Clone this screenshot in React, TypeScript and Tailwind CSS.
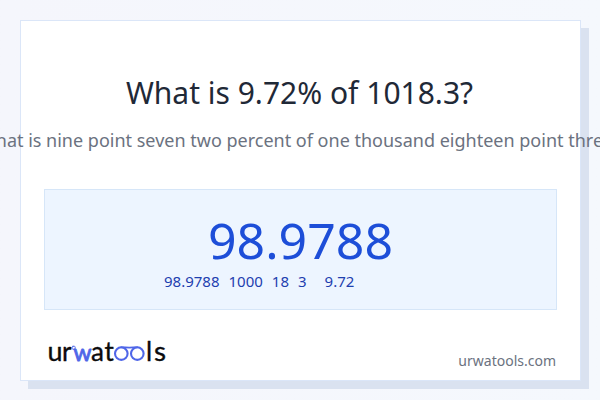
const steps = ["98.9788", "1000", "18", "3", "9.72"];
const stepGaps = ["", "ml-[9px]", "ml-[9px]", "ml-[9px]", "ml-[18px]"];

function Logo() {
  return (
    <svg
      width="120"
      height="30"
      viewBox="0 0 120 30"
      className="overflow-visible font-['Lato','Liberation_Sans',sans-serif] text-[26px]"
      role="img"
      aria-label="urwatools"
    >
      <g fill="#0b0b0d" stroke="#0b0b0d" strokeWidth="0.35" strokeLinejoin="round">
        <text x="-0.5" y="21.5" textLength="15" lengthAdjust="spacingAndGlyphs">u</text>
        <text x="14" y="21.5">r</text>
        <text x="43" y="21.5">a</text>
        <text x="56.5" y="21.5">t</text>
        <text x="98" y="21.5">l</text>
        <text x="106" y="21.5" textLength="12" lengthAdjust="spacingAndGlyphs">s</text>
      </g>
      <text
        x="25.5"
        y="21.5"
        fill="#4f66e8"
        stroke="#4f66e8"
        strokeWidth="0.9"
        strokeLinejoin="round"
        textLength="18"
        lengthAdjust="spacingAndGlyphs"
        className="text-[24px]"
      >
        w
      </text>
      <g fill="none" stroke="#4f66e8" strokeLinecap="round">
        <rect x="24.2" y="7.3" width="3" height="3" rx="0.8" strokeWidth="0.9" />
        <circle cx="73.3" cy="14.6" r="6.3" strokeWidth="2.1" />
        <circle cx="89.3" cy="14.6" r="6.3" strokeWidth="2.1" />
        <path d="M73.3 8.3c3 0 5 0.3 8 0.3s5-0.3 8-0.3" strokeWidth="1.8" />
      </g>
    </svg>
  );
}

export default function App() {
  return (
    <main className="h-[400px] w-[600px] overflow-hidden bg-linear-to-r from-[#f5f6fc] to-[#f5f8fd] p-5 font-['Noto_Sans',sans-serif]">
      <section className="flex h-[361px] w-[561px] flex-col border border-[#dbe6f8] bg-white px-[23px] shadow-[8px_8px_0_#dae2f0]">
        <h1 className="mt-[51px] mr-0.5 text-center text-[30px] leading-[42px] text-[#1f2937]">
          What is 9.72% of 1018.3?
        </h1>
        <p className="mt-3 mr-px flex h-7 justify-center text-lg leading-7 whitespace-nowrap text-[#6b7280]">
          What is nine point seven two percent of one thousand eighteen point three?
        </p>

        <div className="mt-[35px] h-[121px] w-[513px] shrink-0 border border-[#d6e6f8] bg-[#edf5ff]">
          <div className="mt-[20px] text-center text-[50px] leading-[60px] text-[#1d4ed8]">
            98.9788
          </div>
          <div className="ml-[119px] flex text-[15px] leading-[22px] text-[#1e40af]">
            {steps.map((step, i) => (
              <span key={step} className={stepGaps[i]}>
                {step}
              </span>
            ))}
          </div>
        </div>

        <footer className="mt-[29px] flex justify-between pl-1">
          <Logo />
          <span className="mt-3 mr-px text-sm leading-5 text-[#6b7280]">urwatools.com</span>
        </footer>
      </section>
    </main>
  );
}
